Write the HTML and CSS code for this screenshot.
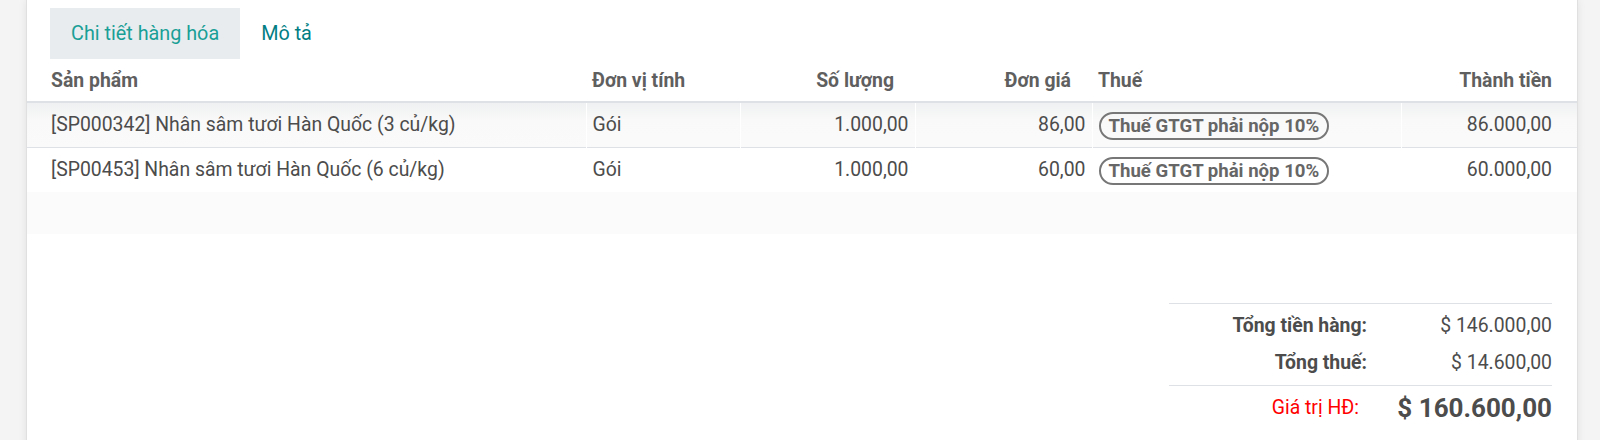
FILE: index.html
```html
<!DOCTYPE html>
<html>

<head>
    <title>Chi tiết hàng hóa</title>
    <meta charset="UTF-8">
    <meta name="viewport" content="width=device-width, initial-scale=1">
    <link rel="stylesheet" href="styles.css">
</head>

<body>
    <div class="sheet">
        <ul class="tabs">
            <li class="tab active">Chi tiết hàng hóa</li>
            <li class="tab">Mô tả</li>
        </ul>

        <table class="lines">
            <colgroup>
                <col style="width: 559px">
                <col style="width: 154px">
                <col style="width: 175px">
                <col style="width: 177px">
                <col style="width: 309px">
                <col style="width: 176px">
            </colgroup>
            <thead>
                <tr>
                    <th>Sản phẩm</th>
                    <th>Đơn vị tính</th>
                    <th class="num">Số lượng</th>
                    <th class="num">Đơn giá</th>
                    <th>Thuế</th>
                    <th class="num">Thành tiền</th>
                </tr>
            </thead>
            <tbody>
                <tr class="hovered">
                    <td>[SP000342] Nhân sâm tươi Hàn Quốc (3 củ/kg)</td>
                    <td>Gói</td>
                    <td class="num">1.000,00</td>
                    <td class="num">86,00</td>
                    <td><span class="badge">Thuế GTGT phải nộp 10%</span></td>
                    <td class="num">86.000,00</td>
                </tr>
                <tr class="last-line">
                    <td>[SP00453] Nhân sâm tươi Hàn Quốc (6 củ/kg)</td>
                    <td>Gói</td>
                    <td class="num">1.000,00</td>
                    <td class="num">60,00</td>
                    <td><span class="badge">Thuế GTGT phải nộp 10%</span></td>
                    <td class="num">60.000,00</td>
                </tr>
                <tr class="filler">
                    <td colspan="6"></td>
                </tr>
            </tbody>
        </table>

        <div class="totals">
            <div class="total-label">Tổng tiền hàng:</div>
            <div class="total-value">$ 146.000,00</div>
            <div class="total-label">Tổng thuế:</div>
            <div class="total-value">$ 14.600,00</div>
            <div class="total-label grand">Giá trị HĐ:</div>
            <div class="total-value grand">$ 160.600,00</div>
        </div>
    </div>
</body>

</html>
```

FILE: styles.css
```css
body {
    margin: 0;
    padding: 0;
    background-color: #f4f4f4;
    font-family: Roboto, "Noto Sans", sans-serif;
    font-size: 19.4px;
    color: #4c4c4c;
    overflow: hidden;
}

.sheet {
    margin: 0 22px 0 26px;
    min-height: 100vh;
    background-color: #fff;
    border-left: 1px solid #e0e0e0;
    border-right: 1px solid #e0e0e0;
    box-shadow: 0 0 8px rgba(0, 0, 0, 0.08);
    padding-top: 8px;
}

/* Tabs */
.tabs {
    list-style: none;
    margin: 0;
    padding: 0 0 0 23px;
    display: flex;
}

.tab {
    padding: 11px 21px;
    line-height: 29px;
    font-size: 19.8px;
    color: #017e84;
}

.tab.active {
    background-color: #e9ecef;
    color: #1a9f97;
}

/* Lines table */
.lines {
    width: 100%;
    border-collapse: collapse;
    table-layout: fixed;
}

.lines th {
    text-align: left;
    font-weight: bold;
    color: #5f5f5f;
    line-height: 29px;
    padding: 6.5px 6px;
    border-bottom: 2px solid #dee2e6;
}

.lines td {
    line-height: 29px;
    padding: 7px 6px;
    white-space: nowrap;
    border-left: 1px solid #fff;
}

.lines tbody tr {
    border-bottom: 1px solid #dee2e6;
}

.lines tbody tr.last-line,
.lines tbody tr.filler {
    border-bottom: none;
}

.lines th:first-child,
.lines td:first-child {
    padding-left: 24px;
    border-left: none;
}

.lines th:last-child,
.lines td:last-child {
    padding-right: 25px;
}

.lines .num {
    text-align: right;
}

.lines th.num {
    padding-right: 21px;
}

.lines th.num:last-child {
    padding-right: 25px;
}

.lines tr.hovered td {
    background: linear-gradient(#eff0f1, #f9f9f9 40%, #fafafa);
}

.lines tr.filler td {
    background-color: #fbfbfb;
    height: 42px;
    padding: 0;
}

.badge {
    display: inline-block;
    vertical-align: middle;
    border: 2px solid #777;
    border-radius: 15px;
    padding: 0 8px;
    line-height: 24px;
    font-size: 18.6px;
    font-weight: bold;
    color: #666;
}

/* Totals */
.totals {
    width: 383px;
    margin: 69px 25px 0 auto;
    display: grid;
    grid-template-columns: 1fr 185px;
    border-top: 1px solid #dee2e6;
}

.total-label {
    text-align: right;
    font-weight: bold;
    line-height: 29px;
    padding-top: 7px;
    padding-bottom: 1px;
}

.total-value {
    text-align: right;
    line-height: 29px;
    padding-top: 7px;
    padding-bottom: 1px;
}

.total-label:nth-child(3),
.total-value:nth-child(4) {
    padding-bottom: 8px;
}

.grand {
    border-top: 1px solid #dee2e6;
    padding-top: 6px;
}

.total-label.grand {
    font-weight: normal;
    color: #f00;
    padding-right: 8px;
    line-height: 32px;
}

.total-value.grand {
    font-size: 26px;
    font-weight: bold;
    line-height: 32px;
}
```
